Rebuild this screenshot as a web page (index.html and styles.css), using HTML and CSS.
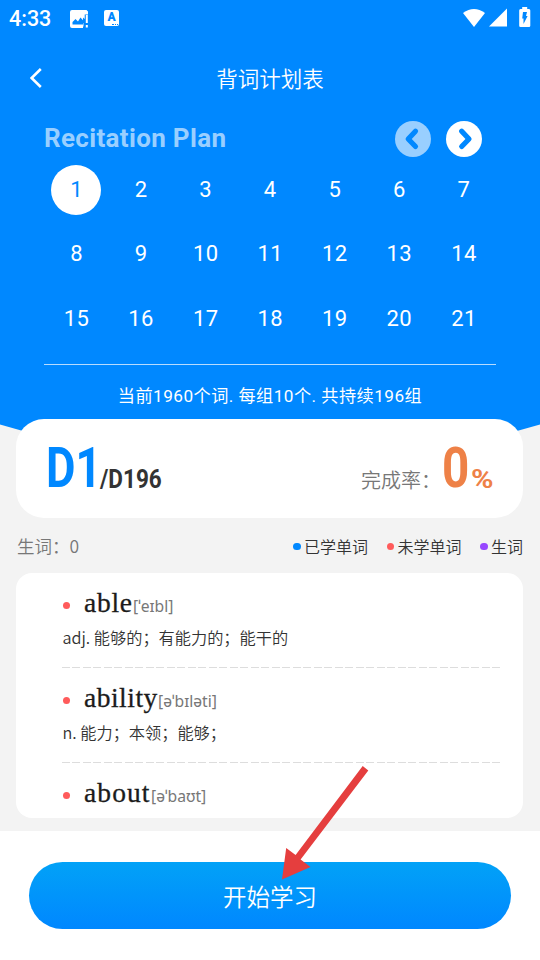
FILE: index.html
```
<!DOCTYPE html>
<html lang="zh-CN">
<head>
<meta charset="utf-8">
<title>背词计划表</title>
<link rel="stylesheet" href="styles.css">
</head>
<body>
<main class="screen">
  <header class="hero">
    <div class="status">
      <span class="clock">4:33</span>
      <svg class="s-img" width="19" height="19" viewBox="0 0 19 19"><path fill="#fff" d="M2 0H16.5L18 1.5V4.5H14.7V9L13 7.5V13H13.5V16.5H13V18H2Q0 18 0 16V2Q0 0 2 0Z"/><path fill="#0088ff" d="M2.5 14.5V12L5.5 9L8 11.5L10.5 7.5L13.2 10.5V14.5Z"/><path fill="#fff" d="M15.8 5H17.8V13H15.8ZM15.8 15H17.8V17.5H15.8Z"/></svg>
      <span class="s-a">A<i></i></span>
      <svg class="s-wifi" width="24" height="19" viewBox="0 0 24 19"><path fill="#fff" d="M1 5Q12-3 23 5L12 19Z"/></svg>
      <svg class="s-cell" width="19" height="19" viewBox="0 0 19 19"><path fill="#fff" d="M18 .5V18.5H0Z"/></svg>
      <svg class="s-bat" width="12" height="21" viewBox="0 0 12 21"><path fill="#fff" d="M3.2 0H8.2V2H10Q11.3 2 11.3 3.5V18.8Q11.3 20 10 20H1.5Q.2 20 .2 18.8V3.5Q.2 2 1.5 2H3.2Z"/><path fill="#0088ff" d="M4 5H8L7 9H8.6L4.5 17V11.5H3.2Z"/></svg>
    </div>
    <nav class="nav">
      <svg width="12" height="20" viewBox="0 0 12 20"><path d="M10.8 1L1.6 10L10.8 19" fill="none" stroke="#fff" stroke-width="2.6"/></svg>
      <h1>背词计划表</h1>
    </nav>
    <div class="plan-head">
      <h2>Recitation Plan</h2>
      <svg width="36" height="36" viewBox="0 0 36 36"><circle cx="18" cy="18" r="18" fill="#99cfff"/><path d="M20.5 10.2L13.2 18L20.5 25.5" fill="none" stroke="#0088ff" stroke-width="5.2" stroke-linecap="round" stroke-linejoin="round"/></svg>
      <svg width="36" height="36" viewBox="0 0 36 36"><circle cx="18" cy="18" r="18" fill="#fff"/><path d="M15.7 10.2L23 18L15.7 25.5" fill="none" stroke="#0088ff" stroke-width="5.2" stroke-linecap="round" stroke-linejoin="round"/></svg>
    </div>
    <div class="days">
      <span class="on">1</span><span>2</span><span>3</span><span>4</span><span>5</span><span>6</span><span>7</span>
      <span>8</span><span>9</span><span>10</span><span>11</span><span>12</span><span>13</span><span>14</span>
      <span>15</span><span>16</span><span>17</span><span>18</span><span>19</span><span>20</span><span>21</span>
    </div>
    <p class="summary">当前1960个词. 每组10个. 共持续196组</p>
  </header>

  <section class="progress">
    <span class="day"><b>D1</b></span><span class="total"><b>/D196</b></span>
    <span class="label">完成率：</span><span class="rate"><b>0</b></span><span class="pct"><b>%</b></span>
  </section>

  <div class="legend">
    <span class="new">生词：0</span>
    <span class="key blue">已学单词</span><span class="key red">未学单词</span><span class="key purple">生词</span>
  </div>

  <section class="words">
    <article>
      <div class="word"><strong class="w1">able</strong><span>[ˈeɪbl]</span></div>
      <p>adj. 能够的；有能力的；能干的</p>
    </article>
    <article>
      <div class="word"><strong class="w2">ability</strong><span>[əˈbɪləti]</span></div>
      <p>n. 能力；本领；能够；</p>
    </article>
    <article>
      <div class="word"><strong class="w3">about</strong><span>[əˈbaʊt]</span></div>
    </article>
  </section>

  <footer class="foot">
    <button class="start">开始学习</button>
  </footer>
  <svg class="pointer" width="90" height="120" viewBox="0 0 90 120"><path fill="#e53e3e" d="M82.7 1L88.3 5.5L20.6 94.5L30.5 102L2 114.5L6.2 83L15.6 90Z"/></svg>
</main>
</body>
</html>
```
FILE: styles.css
```
* { box-sizing: border-box; }
body { margin: 0; background: #fff; font-family: Roboto, "Noto Sans CJK SC", sans-serif; }
h1, h2, p { margin: 0; font-weight: 400; }
svg { display: block; flex: none; }
.screen { position: relative; width: 540px; height: 960px; overflow: hidden; background: #f3f3f3; display: flex; flex-direction: column; }

.hero { height: 450px; flex: none; background: #0088ff; color: #fff; clip-path: polygon(0 0, 100% 0, 100% 424.5px, 450px 450px, 90px 450px, 0 424.5px); }
.status { height: 38px; display: flex; align-items: flex-start; padding: 7px 10px 0 9px; }
.clock { font-size: 21.5px; line-height: 24px; font-weight: 500; width: 61px; }
.s-img { margin-top: 3px; }
.s-a { width: 15px; height: 16px; margin: 3px 0 0 15px; border-radius: 2px; background: #fff; color: #0088ff; font: 900 12px/15px Roboto, sans-serif; text-align: center; display: flex; flex-direction: column; align-items: center; }
.s-a i { width: 6px; border-top: 1px dotted #0088ff; margin: -1px 0 0 7px; }
.s-wifi { margin: 1px 0 0 auto; }
.s-cell { margin: 1px 0 0 3px; }
.s-bat { margin: 0 -1px 0 11px; }
.nav { height: 80px; display: flex; align-items: center; padding-left: 30px; }
.nav h1 { flex: 1; margin-right: 42px; text-align: center; font-size: 21.5px; font-weight: 350; line-height: 32px; padding-top: 3px; }
.plan-head { height: 42px; display: flex; align-items: center; padding: 0 58px 0 44px; gap: 15px; }
.plan-head h2 { flex: 1; font-size: 26px; line-height: 36px; font-weight: 700; letter-spacing: .33px; color: #99cfff; padding-bottom: 2px; }
.days { margin: -2px 44px 0; height: 206.5px; border-bottom: 1px solid #b7dcff; display: grid; grid-template-columns: repeat(7, 1fr); grid-template-rows: 64px 64.5px 64.5px; justify-items: center; font-size: 22px; letter-spacing: .4px; }
.days span { width: 50px; height: 50px; margin-top: 7px; line-height: 50px; text-align: center; padding-left: .5px; }
.days .on { border-radius: 50%; background: #fff; color: #0088ff; }
.summary { height: 28px; margin-top: 17px; text-align: center; font-size: 17.2px; line-height: 28px; letter-spacing: .45px; }

.progress { flex: none; width: 507px; height: 99px; margin: -31px 0 0 16px; border-radius: 28px; background: #fff; display: flex; align-items: flex-end; padding: 0 28px 25px 30px; white-space: nowrap; position: relative; }
.progress b { display: inline-block; transform-origin: 0 100%; }
.day { width: 54px; font-size: 56px; line-height: 56px; color: #0088ff; height: 53px; }
.day b { transform: scaleX(.81); }
.total { width: 64px; font-size: 25px; line-height: 26px; color: #333; height: 26px; }
.total b { transform: scaleX(.9); }
.label { margin-left: auto; width: 81px; font: 350 20px/28px "Noto Sans CJK SC", sans-serif; color: #777; height: 27px; }
.rate { width: 29px; font-size: 56px; line-height: 56px; color: #ee8147; height: 53px; }
.rate b { transform: scaleX(.85); }
.pct { width: 24px; font-size: 25px; line-height: 26px; color: #ee8147; height: 26px; }
.pct b { transform: scaleX(1.22); }

.legend { flex: none; height: 55px; padding: 1px 17px 0; display: flex; align-items: center; font: 350 16px/24px "Noto Sans CJK SC", sans-serif; color: #333; }
.new { flex: 1; font-size: 17.5px; color: #777; }
.key { display: flex; align-items: center; gap: 3px; margin-left: 19px; }
.key::before { content: ""; width: 7.5px; height: 7.5px; border-radius: 50%; background: #0088ff; margin-top: 1px; }
.red::before { background: #ff5b5b; }
.purple::before { background: #9747ff; }

.words { flex: none; width: 507px; height: 245px; margin-left: 16px; border-radius: 16px; background: #fff; overflow: hidden; padding-left: 45.5px; }
article { height: 95px; width: 438.5px; background: repeating-linear-gradient(90deg, #ddd 0 8px, transparent 8px 10.5px) 0 100% / 100% 1px no-repeat; }
article:last-child { background: none; }
.word { height: 48px; padding-top: 12px; display: flex; align-items: baseline; white-space: nowrap; }
.word::before { content: ""; width: 7.5px; height: 7.5px; border-radius: 50%; background: #ff5b5b; margin: 0 14px 0 1px; transform: translateY(-3px); }
.word strong { font: 400 27.5px/36px "Liberation Serif", serif; color: #1b1b1b; -webkit-text-stroke: .3px #1b1b1b; }
.word span { font: 400 15.7px/24px "Noto Sans", sans-serif; color: #777; }
.word .w1 { width: 49px; letter-spacing: .75px; }
.word .w2 { width: 74px; letter-spacing: .5px; }
.word .w3 { width: 67px; letter-spacing: 1.1px; }
article p { padding-left: 1px; margin-top: 3px; font: 350 16.2px/26px "Noto Sans CJK SC", sans-serif; color: #333; }

.foot { flex: none; margin-top: 13px; height: 130px; background: #fff; padding: 31px 29px 0; }
.start { display: block; width: 100%; height: 67px; border: 0; border-radius: 34px; background: linear-gradient(#02a2f7, #0087ff); color: #fff; font: 350 23.5px/66px "Noto Sans CJK SC", sans-serif; padding: 0; }
.pointer { position: absolute; left: 280px; top: 765px; }
```
